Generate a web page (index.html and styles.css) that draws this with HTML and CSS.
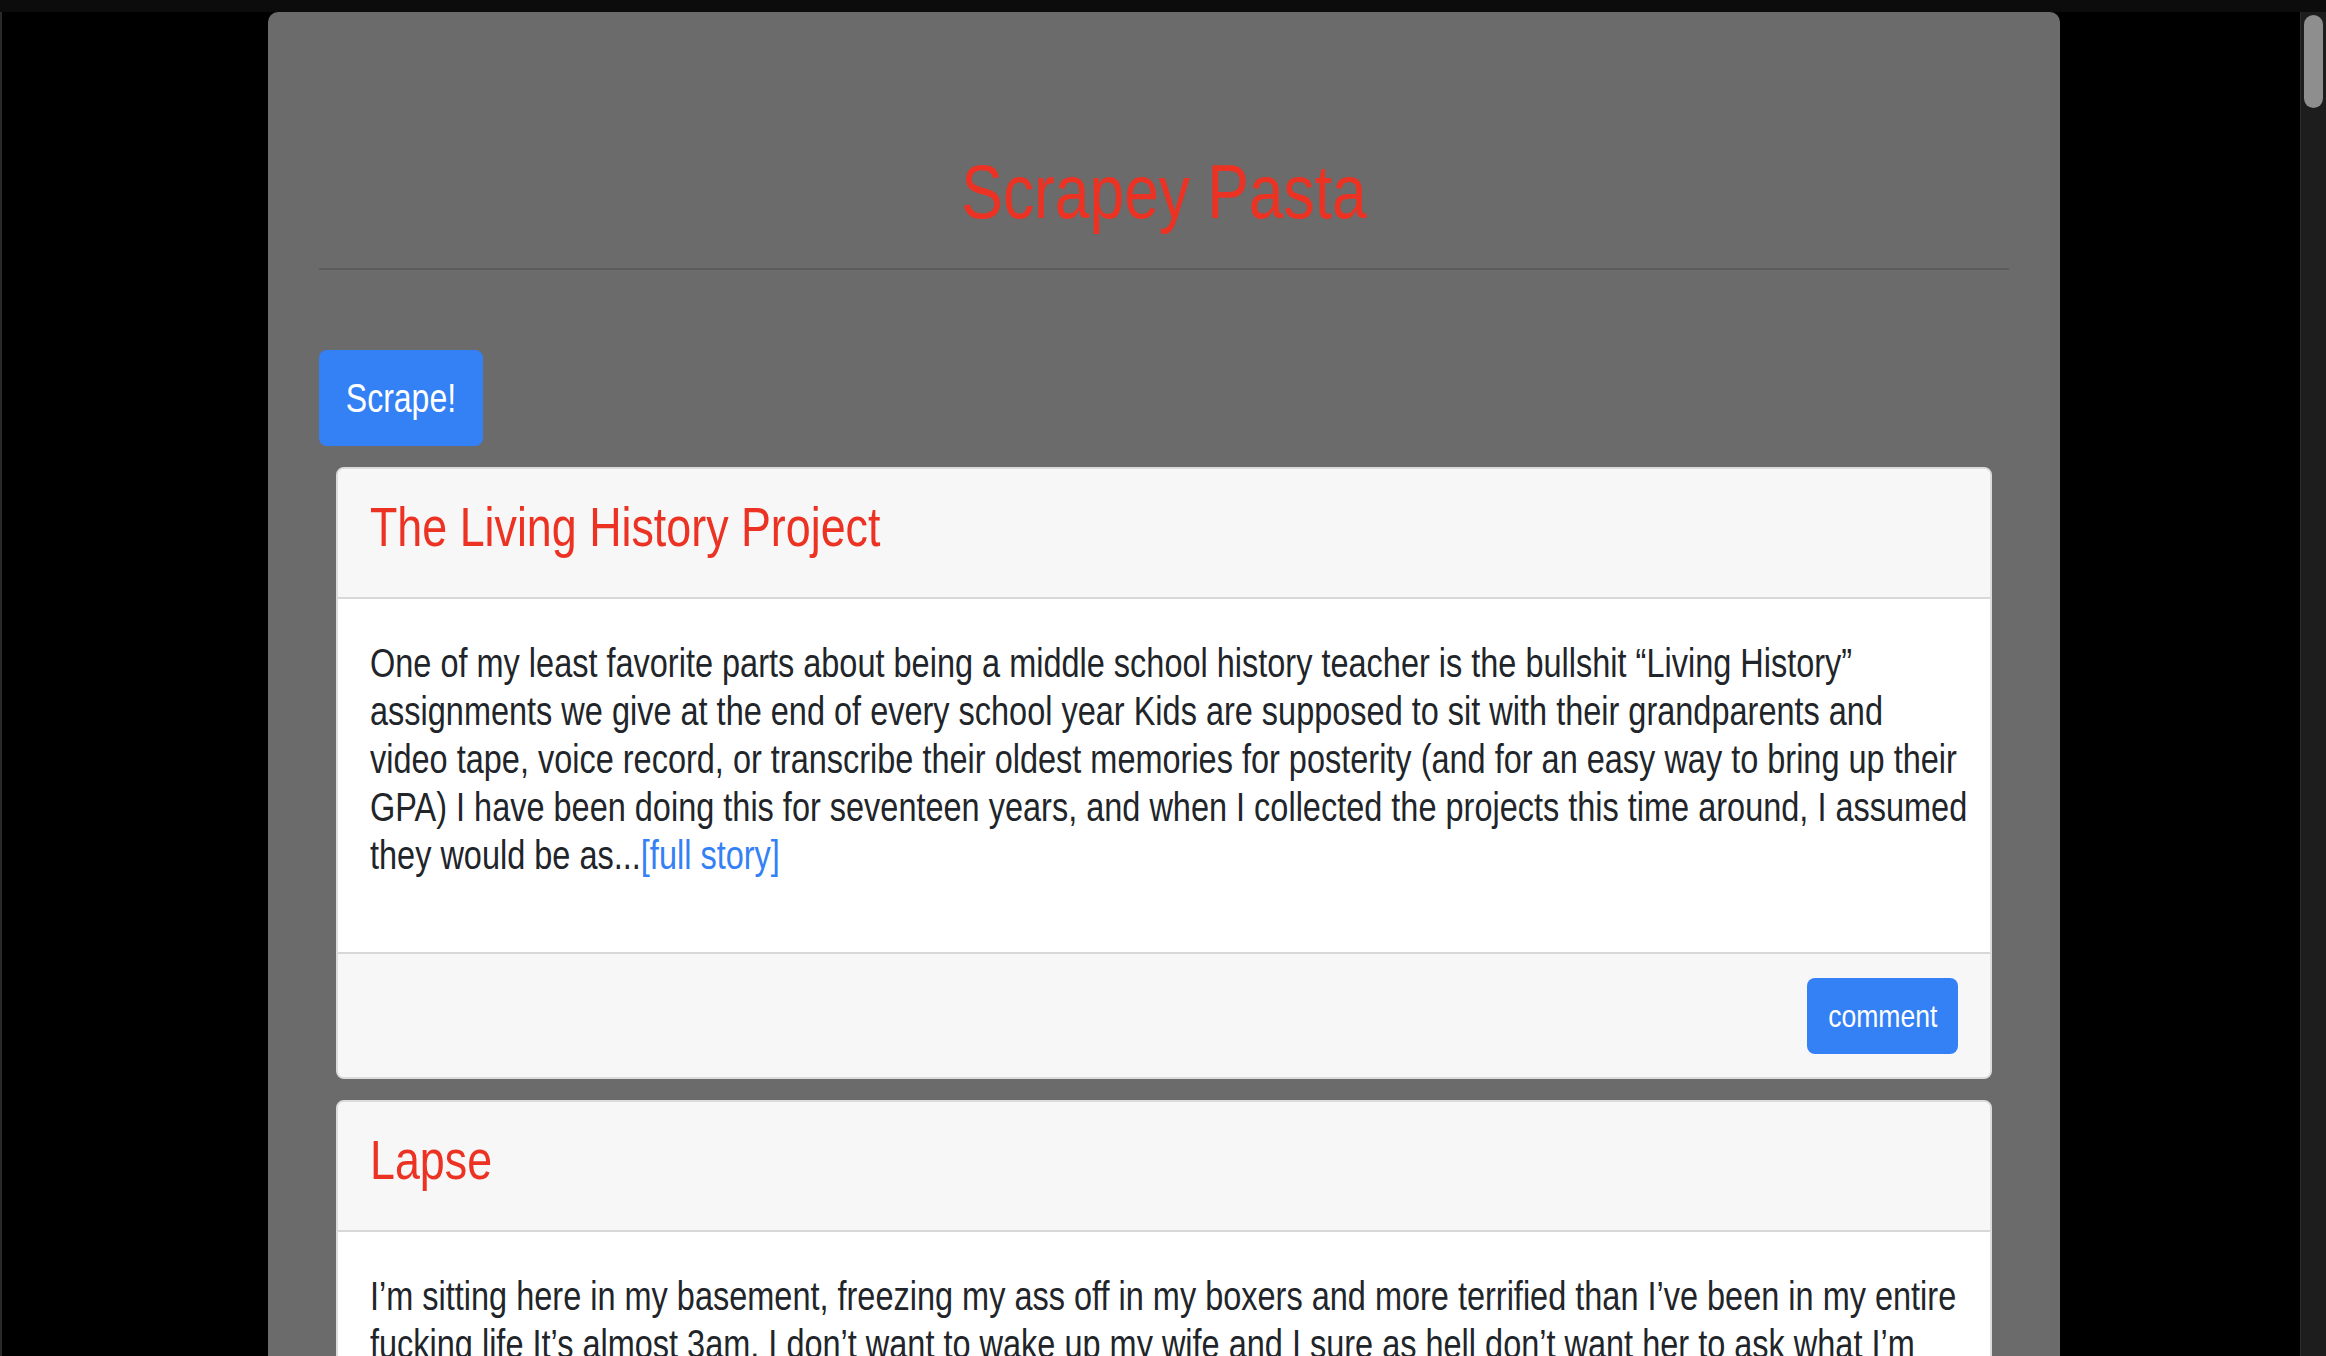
FILE: index.html
```html
<!DOCTYPE html>
<html lang="en">
<head>
<meta charset="utf-8">
<title>Scrapey Pasta</title>
<link rel="stylesheet" href="styles.css">
</head>
<body>
<div class="topbar"></div>
<div class="viewport">
  <div class="container">
    <header class="masthead">
      <h1 class="site-title">Scrapey Pasta</h1>
    </header>
    <hr class="rule">
    <button class="btn btn-scrape" type="button"><span class="btn-label">Scrape!</span></button>
    <div class="articles">
      <article class="card">
        <div class="card-header">
          <h3 class="card-title">The Living History Project</h3>
        </div>
        <div class="card-body">
          <p class="card-text">One of my least favorite parts about being a middle school history teacher is the bullshit “Living History”<br>assignments we give at the end of every school year Kids are supposed to sit with their grandparents and<br>video tape, voice record, or transcribe their oldest memories for posterity (and for an easy way to bring up their<br>GPA) I have been doing this for seventeen years, and when I collected the projects this time around, I assumed<br>they would be as...<a class="more" href="#">[full story]</a></p>
        </div>
        <div class="card-footer">
          <button class="btn btn-comment" type="button"><span class="btn-label">comment</span></button>
        </div>
      </article>
      <article class="card">
        <div class="card-header">
          <h3 class="card-title">Lapse</h3>
        </div>
        <div class="card-body">
          <p class="card-text">I’m sitting here in my basement, freezing my ass off in my boxers and more terrified than I’ve been in my entire<br>fucking life It’s almost 3am. I don’t want to wake up my wife and I sure as hell don’t want her to ask what I’m<br>doing down here, because I don’t think I could explain it to her...<a class="more" href="#">[full story]</a></p>
        </div>
        <div class="card-footer">
          <button class="btn btn-comment" type="button"><span class="btn-label">comment</span></button>
        </div>
      </article>
    </div>
  </div>
  <div class="scrollbar"><div class="thumb"></div></div>
</div>
</body>
</html>
```

FILE: styles.css
```css
html, body {
  margin: 0;
  padding: 0;
  background: #000;
}

body {
  height: 100vh;
  overflow: hidden;
  display: flex;
  flex-direction: column;
  font-family: "Liberation Sans", Arial, sans-serif;
}

.topbar {
  height: 12px;
  flex: none;
  background: #0c0c0c;
}

.viewport {
  position: relative;
  flex: 1;
  min-height: 0;
  overflow: hidden;
  border-left: 2px solid #2a2a2a;
}

.container {
  width: 1792px;
  min-height: 100%;
  box-sizing: border-box;
  margin: 0 auto;
  padding: 134px 51px 0;
  background: #6b6b6b;
  border-radius: 10px 10px 0 0;
}

/* the reference renders its type horizontally condensed */
.site-title {
  margin: 0;
  font-size: 76px;
  line-height: 91px;
  font-weight: normal;
  text-align: center;
  color: #ec3223;
  transform: scaleX(0.82);
}

.rule {
  margin: 31px 0 0;
  border: 0;
  height: 2px;
  background: #5b5b5b;
}

.btn {
  display: block;
  border: 0;
  border-radius: 8px;
  background: #3480f5;
  color: #fff;
  font-family: inherit;
  text-align: center;
  white-space: nowrap;
  padding: 0;
  cursor: pointer;
}

.btn-label {
  display: inline-block;
  transform: scaleX(0.8);
}

.btn-scrape {
  margin-top: 80px;
  width: 164px;
  height: 96px;
  font-size: 40px;
  line-height: 48px;
}

.articles {
  margin-top: 21px;
  padding: 0 17px;
}

.card {
  background: #fff;
  border: 2px solid #dcdcdc;
  border-radius: 8px;
  overflow: hidden;
  margin-bottom: 21px;
}

.card-header {
  background: #f7f7f7;
  padding: 24px 32px 21px;
  border-bottom: 2px solid #d8d8d8;
}

.card-title {
  margin: 0 0 16px;
  font-size: 56px;
  line-height: 67px;
  font-weight: normal;
  color: #ec3223;
  transform: scaleX(0.8);
  transform-origin: left center;
}

.card-body {
  padding: 40px 32px 41px;
}

.card-text {
  margin: 0 0 32px;
  font-size: 40px;
  line-height: 48px;
  color: #212529;
  white-space: nowrap;
  transform: scaleX(0.812);
  transform-origin: left top;
}

.more {
  color: #3480f5;
  text-decoration: none;
}

.card-footer {
  display: flex;
  justify-content: flex-end;
  background: #f7f7f7;
  border-top: 2px solid #d8d8d8;
  padding: 24px 32px 23px;
}

.btn-comment {
  width: 151px;
  height: 76px;
  font-size: 32px;
  line-height: 38px;
}

.btn-comment .btn-label {
  transform: scaleX(0.83);
}

.scrollbar {
  position: absolute;
  top: 0;
  right: 0;
  bottom: 0;
  width: 26px;
  box-sizing: border-box;
  padding: 3px 0 0 3px;
  background: #1d1d1d;
  border-left: 1px solid #2b2b2b;
}

.thumb {
  width: 19px;
  height: 93px;
  border-radius: 10px;
  background: #8e8e8e;
}
```
